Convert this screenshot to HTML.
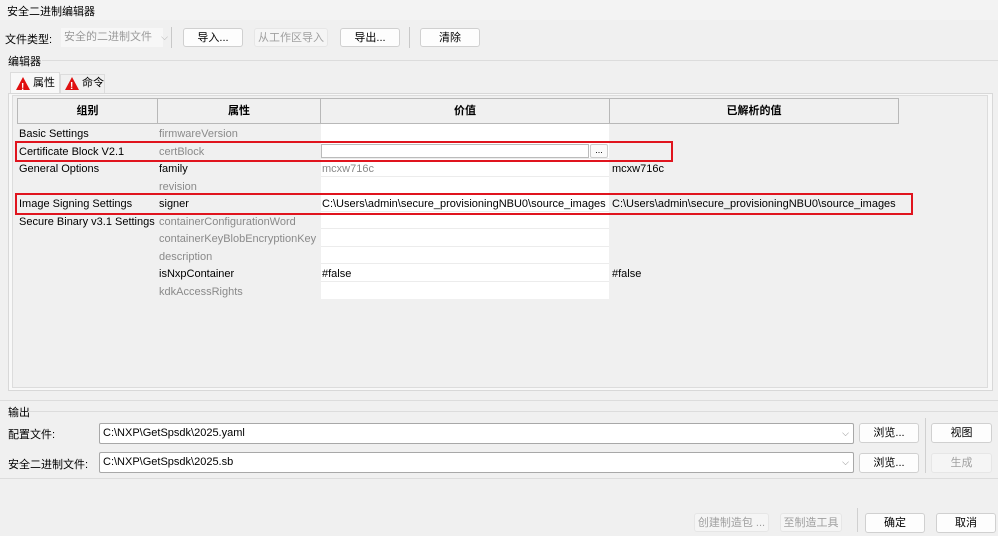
<!DOCTYPE html>
<html><head><meta charset="utf-8"><style>
*{box-sizing:border-box;margin:0;padding:0}
body{width:998px;height:536px;background:#f0f0f0;font-family:"Liberation Sans","Noto Sans CJK SC",sans-serif;font-size:11px;color:#000;position:relative;overflow:hidden}
.a{position:absolute;white-space:nowrap}
.btn{position:absolute;background:#fdfdfd;border:1px solid #d0d0d0;border-radius:3px;text-align:center;line-height:18px;font-size:11px}
.dis{background:#f5f5f5;color:#a0a0a0;border-color:#e6e6e6}
.hd{position:absolute;top:98px;height:26px;border:1px solid #b8b8b8;background:#f0f0f0;font-weight:bold;text-align:center;line-height:24px;font-size:11px}
.c{position:absolute;height:17.5px;line-height:17px;padding-top:2px;font-size:11px}
.g{color:#8a8a8a}
.w{background:#fff;border-bottom:1px solid #ececec}
.red{position:absolute;border:2px solid #e0141e}
.inp{position:absolute;background:#fff;border:1px solid #a8a8a8;border-radius:2px;line-height:19px;padding-left:3px;font-size:11px}
.dd{position:absolute;right:4px;top:0;color:#888;font-size:9px}
.tri{display:inline-block;width:0;height:0;border-left:7px solid transparent;border-right:7px solid transparent;border-bottom:13px solid #e01010;position:relative;vertical-align:middle}
.tri:after{content:"!";position:absolute;left:-2px;top:1px;color:#fff;font-size:10px;font-weight:bold}
</style></head><body>
<div class="a" style="left:0;top:0;width:998px;height:20px;background:#f3f3f3"></div>
<div class="a" style="left:7px;top:3px;font-size:11px">安全二进制编辑器</div>
<div class="a" style="left:5px;top:31px">文件类型:</div>
<div class="a" style="left:61px;top:28px;width:102px;height:19px;background:#f7f7f7;color:#9a9a9a;line-height:19px;padding-left:3px">安全的二进制文件 <span style="color:#aaa;font-size:9px;margin-left:6px">⌵</span></div>
<div class="a" style="left:171px;top:27px;width:1px;height:21px;background:#c8c8c8"></div>
<div class="btn" style="left:183px;top:28px;width:60px;height:19px">导入...</div>
<div class="btn dis" style="left:254px;top:28px;width:74px;height:19px">从工作区导入</div>
<div class="btn" style="left:340px;top:28px;width:60px;height:19px">导出...</div>
<div class="a" style="left:409px;top:27px;width:1px;height:21px;background:#c8c8c8"></div>
<div class="btn" style="left:420px;top:28px;width:60px;height:19px">清除</div>
<div class="a" style="left:8px;top:53px">编辑器</div>
<div class="a" style="left:42px;top:60px;width:956px;height:1px;background:#dcdcdc"></div>
<div class="a" style="left:10px;top:72px;width:50px;height:22px;background:#f8f8f8;border:1px solid #dcdcdc;border-bottom:none;line-height:20px;padding-left:5px"><span class="tri"></span> 属性</div>
<div class="a" style="left:60px;top:74px;width:45px;height:19px;border:1px solid #dcdcdc;border-bottom:none;line-height:17px;padding-left:4px"><span class="tri"></span> 命令</div>
<div class="a" style="left:8px;top:93px;width:985px;height:298px;border:1px solid #d8d8d8;background:#f8f8f8"></div>
<div class="a" style="left:12px;top:95px;width:976px;height:293px;border:1px solid #dcdcdc;background:#f0f0f0"></div>
<div class="hd" style="left:17px;width:141px">组别</div>
<div class="hd" style="left:157px;width:164px">属性</div>
<div class="hd" style="left:320px;width:290px">价值</div>
<div class="hd" style="left:609px;width:290px">已解析的值</div>
<div class="c w" style="left:321px;top:124px;width:288px"></div>
<div class="c w" style="left:321px;top:141.5px;width:288px"></div>
<div class="c w" style="left:321px;top:159px;width:288px"></div>
<div class="c w" style="left:321px;top:176.5px;width:288px"></div>
<div class="c w" style="left:321px;top:194px;width:288px"></div>
<div class="c w" style="left:321px;top:211.5px;width:288px"></div>
<div class="c w" style="left:321px;top:229px;width:288px"></div>
<div class="c w" style="left:321px;top:246.5px;width:288px"></div>
<div class="c w" style="left:321px;top:264px;width:288px"></div>
<div class="c w" style="left:321px;top:281.5px;width:288px;border-bottom:none"></div>
<div class="a" style="left:321px;top:144px;width:268px;height:14px;border:1px solid #bbb;background:#fff"></div>
<div class="a" style="left:590px;top:144px;width:18px;height:14px;border:1px solid #ccc;border-radius:2px;background:#fafafa;font-size:9px;text-align:center;line-height:10px">...</div>
<div class="c" style="left:19px;top:124px">Basic Settings</div>
<div class="c g" style="left:159px;top:124px">firmwareVersion</div>
<div class="c" style="left:19px;top:141.5px">Certificate Block V2.1</div>
<div class="c g" style="left:159px;top:141.5px">certBlock</div>
<div class="c" style="left:19px;top:159px">General Options</div>
<div class="c" style="left:159px;top:159px">family</div>
<div class="c g" style="left:322px;top:159px">mcxw716c</div>
<div class="c" style="left:612px;top:159px">mcxw716c</div>
<div class="c g" style="left:159px;top:176.5px">revision</div>
<div class="c" style="left:19px;top:194px">Image Signing Settings</div>
<div class="c" style="left:159px;top:194px">signer</div>
<div class="c" style="left:322px;top:194px">C:\Users\admin\secure_provisioningNBU0\source_images</div>
<div class="c" style="left:612px;top:194px">C:\Users\admin\secure_provisioningNBU0\source_images</div>
<div class="c" style="left:19px;top:211.5px">Secure Binary v3.1 Settings</div>
<div class="c g" style="left:159px;top:211.5px">containerConfigurationWord</div>
<div class="c g" style="left:159px;top:229px">containerKeyBlobEncryptionKey</div>
<div class="c g" style="left:159px;top:246.5px">description</div>
<div class="c" style="left:159px;top:264px">isNxpContainer</div>
<div class="c" style="left:322px;top:264px">#false</div>
<div class="c" style="left:612px;top:264px">#false</div>
<div class="c g" style="left:159px;top:281.5px">kdkAccessRights</div>
<div class="red" style="left:15px;top:141px;width:658px;height:21px"></div>
<div class="red" style="left:15px;top:193px;width:898px;height:22px"></div>
<div class="a" style="left:0;top:400px;width:998px;height:1px;background:#dcdcdc"></div>
<div class="a" style="left:8px;top:404px">输出</div>
<div class="a" style="left:28px;top:411px;width:970px;height:1px;background:#dcdcdc"></div>
<div class="a" style="left:8px;top:426px">配置文件:</div>
<div class="inp" style="left:99px;top:423px;width:755px;height:21px">C:\NXP\GetSpsdk\2025.yaml<span class="dd">⌵</span></div>
<div class="btn" style="left:859px;top:423px;width:60px;height:20px">浏览...</div>
<div class="a" style="left:925px;top:418px;width:1px;height:55px;background:#d0d0d0"></div>
<div class="btn" style="left:931px;top:423px;width:61px;height:20px">视图</div>
<div class="a" style="left:8px;top:456px">安全二进制文件:</div>
<div class="inp" style="left:99px;top:452px;width:755px;height:21px">C:\NXP\GetSpsdk\2025.sb<span class="dd">⌵</span></div>
<div class="btn" style="left:859px;top:453px;width:60px;height:20px">浏览...</div>
<div class="btn dis" style="left:931px;top:453px;width:61px;height:20px">生成</div>
<div class="a" style="left:0;top:478px;width:998px;height:1px;background:#dcdcdc"></div>
<div class="btn dis" style="left:694px;top:513px;width:75px;height:19px">创建制造包 ...</div>
<div class="btn dis" style="left:780px;top:513px;width:62px;height:19px">至制造工具</div>
<div class="a" style="left:857px;top:508px;width:1px;height:24px;background:#d0d0d0"></div>
<div class="btn" style="left:865px;top:513px;width:60px;height:20px">确定</div>
<div class="btn" style="left:936px;top:513px;width:60px;height:20px">取消</div>
</body></html>
